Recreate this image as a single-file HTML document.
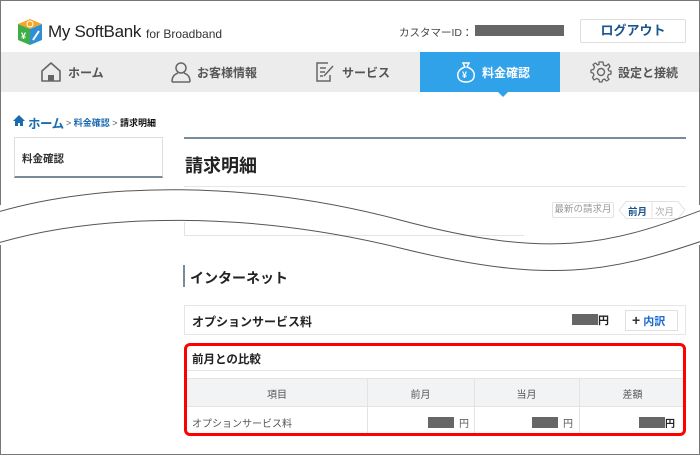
<!DOCTYPE html>
<html><head><meta charset="utf-8"><style>
*{margin:0;padding:0;box-sizing:border-box}
body{width:700px;height:455px;position:relative;overflow:hidden;background:#fff;font-family:"Liberation Sans","Noto Sans CJK JP",sans-serif;color:#333}
.a{position:absolute}
.frame{left:0;top:0;width:700px;height:455px;border:1px solid #777}
.nav{left:1px;top:52px;width:698px;height:40px;background:#ececec}
.ni{top:52px;height:40px;display:flex;align-items:center;font-size:12px;color:#555;font-weight:bold}
.g{background:#666}
</style></head><body>
<div class="a frame"></div>
<svg class="a" style="left:17px;top:18px" width="26" height="28" viewBox="0 0 26 28">
<polygon points="13,1 25,6 13,11 1,6" fill="#f5a623"/>
<circle cx="13" cy="6" r="3" fill="none" stroke="#fff" stroke-width="1"/>
<polygon points="1,6 13,11 13,27 1,22" fill="#3fae49"/>
<polygon points="13,11 25,6 25,22 13,27" fill="#2e8fd6"/>
<text x="4" y="21" font-size="9" fill="#fff" font-weight="bold">¥</text>
<path d="M16,22 L22,13" stroke="#fff" stroke-width="2"/>
</svg>
<div class="a" style="left:48px;top:22px;font-size:17px;color:#222;letter-spacing:-0.3px">My SoftBank</div>
<div class="a" style="left:146px;top:27px;font-size:12px;color:#333">for Broadband</div>
<div class="a" style="left:399px;top:25px;font-size:10.5px;color:#444">カスタマーID：</div>
<div class="a g" style="left:475px;top:25px;width:89px;height:11px"></div>
<div class="a" style="left:580px;top:19px;width:106px;height:24px;border:1px solid #ddd;border-radius:2px;text-align:center;line-height:22px;font-size:13px;font-weight:bold;color:#1a5590">ログアウト</div>
<div class="a nav"></div>
<div class="a" style="left:420px;top:52px;width:140px;height:40px;background:#30a2ea"></div>
<div class="a" style="left:498px;top:92px;width:0;height:0;border-left:5px solid transparent;border-right:5px solid transparent;border-top:5px solid #30a2ea"></div>
<div class="a ni" style="left:40px">
<svg width="22" height="22" viewBox="0 0 22 22"><path d="M2,10 L11,2 L20,10 V20 H2 Z" fill="none" stroke="#666" stroke-width="1.6" stroke-linejoin="round"/><rect x="8" y="14" width="6" height="6" fill="#666"/></svg><span style="margin-left:6px">ホーム</span></div>
<div class="a ni" style="left:171px">
<svg width="20" height="22" viewBox="0 0 20 22"><circle cx="10" cy="7" r="5" fill="none" stroke="#666" stroke-width="1.5"/><path d="M1,21 C1,14 5,13 7,12 M19,21 C19,14 15,13 13,12 M1,21 H19" fill="none" stroke="#666" stroke-width="1.5"/></svg><span style="margin-left:6px">お客様情報</span></div>
<div class="a ni" style="left:315px">
<svg width="20" height="22" viewBox="0 0 20 22"><path d="M13,2 H2 V20 H15 V14" fill="none" stroke="#666" stroke-width="1.5"/><path d="M5,7 H11 M5,11 H10 M5,15 H8 M9,15 L18,5" stroke="#666" stroke-width="1.5"/></svg><span style="margin-left:7px">サービス</span></div>
<div class="a ni" style="left:456px;color:#fff">
<svg width="20" height="22" viewBox="0 0 20 22"><path d="M7,2 H13 L11,6 C17,8 19,12 18,16 C17,20 13,21 10,21 C7,21 3,20 2,16 C1,12 3,8 9,6 Z" fill="none" stroke="#fff" stroke-width="1.5"/><text x="6" y="17" font-size="9" fill="#fff" font-weight="bold">¥</text></svg><span style="margin-left:6px">料金確認</span></div>
<div class="a ni" style="left:590px">
<svg width="22" height="22" viewBox="0 0 22 22"><circle cx="11" cy="11" r="3.5" fill="none" stroke="#666" stroke-width="1.4"/><path d="M9,1 H13 L13.5,4 L16,5 L18.5,3 L20,5.5 L18,8 L19,10 L21,10 V13 L18.5,13.5 L17.5,16 L19,18.5 L16.5,20 L14.5,18 L12.5,19 L12,21 H9.5 L9,18.5 L6.5,17.5 L4,19 L2.5,16.5 L4,14 L3,12 L1,11.5 V9 L3.5,8.5 L4.5,6 L3,3.5 L5.5,2 L7.5,4 L9,3.5 Z" fill="none" stroke="#666" stroke-width="1.3" stroke-linejoin="round"/></svg><span style="margin-left:6px">設定と接続</span></div>
<svg class="a" style="left:13px;top:115px" width="12" height="11" viewBox="0 0 12 11"><path d="M0,6 L6,0 L12,6 H10 V11 H7 V8 H5 V11 H2 V6 Z" fill="#1a6bb0"/></svg>
<div class="a" style="left:28px;top:113px;font-size:12.5px;font-weight:bold;color:#1a6bb0;letter-spacing:-0.5px">ホーム</div>
<div class="a" style="left:66px;top:116px;font-size:9px;color:#555">&gt; <span style="color:#1a6bb0;font-weight:bold">料金確認</span> &gt; <span style="color:#111;font-weight:bold">請求明細</span></div>
<div class="a" style="left:14px;top:137px;width:149px;height:41px;border:1px solid #ddd;border-bottom:2px solid #7b8a99"></div>
<div class="a" style="left:22px;top:151px;font-size:10.5px;font-weight:bold;color:#333">料金確認</div>
<div class="a" style="left:184px;top:137px;width:502px;height:2px;background:#7b8a99"></div>
<div class="a" style="left:185px;top:152px;font-size:18px;font-weight:bold;color:#222">請求明細</div>
<div class="a" style="left:184px;top:186px;width:502px;height:1px;background:#e6e6e6"></div>
<div class="a" style="left:552px;top:202px;width:62px;height:16px;border:1px solid #e3e3e3;border-radius:2px;font-size:9.5px;color:#999;text-align:center;line-height:14px">最新の請求月</div>
<svg class="a" style="left:618px;top:201px" width="70" height="18"><path d="M8,0.5 H60 L67,9 L60,17.5 H8 L1,9 Z" fill="#fff" stroke="#e3e3e3"/><line x1="34" y1="1" x2="34" y2="17" stroke="#e3e3e3"/></svg>
<div class="a" style="left:628px;top:204px;font-size:9.5px;font-weight:bold;color:#1a5590">前月</div>
<div class="a" style="left:655px;top:204px;font-size:9.5px;color:#aaa">次月</div>
<div class="a" style="left:184px;top:222px;width:1px;height:14px;background:#e3e3e3"></div>
<div class="a" style="left:184px;top:235px;width:340px;height:1px;background:#e3e3e3"></div>
<div class="a" style="left:0;top:205px;width:3px;height:40px;background:#fff"></div>
<div class="a" style="left:697px;top:205px;width:3px;height:40px;background:#fff"></div>
<svg class="a" style="left:0;top:0" width="700" height="455">
<path d="M-2,212 C100,182 250,180 400,220 S 610,245 702,210" fill="none" stroke="#555" stroke-width="1"/>
<path d="M-2,243 C100,213 250,211 400,248 S 610,272 702,241" fill="none" stroke="#555" stroke-width="1"/>
</svg>
<div class="a" style="left:183px;top:265px;width:2px;height:22px;background:#7b8a99"></div>
<div class="a" style="left:190px;top:268px;font-size:14px;font-weight:bold;color:#222">インターネット</div>
<div class="a" style="left:184px;top:305px;width:502px;height:30px;border:1px solid #e6e6e6"></div>
<div class="a" style="left:192px;top:313px;font-size:12px;font-weight:bold;color:#222">オプションサービス料</div>
<div class="a g" style="left:572px;top:314px;width:26px;height:11px"></div>
<div class="a" style="left:598px;top:312px;font-size:11px;font-weight:bold;color:#222">円</div>
<div class="a" style="left:625px;top:310px;width:53px;height:21px;border:1px solid #e0e0e0;font-size:11px;font-weight:bold;color:#1a6bd0;line-height:19px;padding-left:6px"><span style="color:#333;font-size:14px">+</span> 内訳</div>
<div class="a" style="left:184px;top:343px;width:502px;height:93px;border:3px solid #f00;border-radius:6px;overflow:hidden">
<div style="position:absolute;left:5px;top:5px;font-size:11.5px;font-weight:bold;color:#222">前月との比較</div>
<div style="position:absolute;left:0;top:24px;width:100%;height:1px;background:#e6e6e6"></div>
<div style="position:absolute;left:0;top:32px;width:100%;height:29px;background:#f2f3f5;border-top:1px solid #e3e3e3;border-bottom:1px solid #e3e3e3"></div>
<div style="position:absolute;left:180px;top:32px;width:1px;height:60px;background:#e3e3e3"></div>
<div style="position:absolute;left:287px;top:32px;width:1px;height:60px;background:#e3e3e3"></div>
<div style="position:absolute;left:392px;top:32px;width:1px;height:60px;background:#e3e3e3"></div>
<div style="position:absolute;left:0;top:40px;width:180px;text-align:center;font-size:10px;color:#555">項目</div>
<div style="position:absolute;left:180px;top:40px;width:107px;text-align:center;font-size:10px;color:#555">前月</div>
<div style="position:absolute;left:287px;top:40px;width:105px;text-align:center;font-size:10px;color:#555">当月</div>
<div style="position:absolute;left:392px;top:40px;width:107px;text-align:center;font-size:10px;color:#555">差額</div>
<div style="position:absolute;left:5px;top:69px;font-size:10px;color:#555">オプションサービス料</div>
<div class="g" style="position:absolute;left:241px;top:71px;width:26px;height:11px"></div>
<div style="position:absolute;left:272px;top:69px;font-size:10px;color:#555">円</div>
<div class="g" style="position:absolute;left:345px;top:71px;width:26px;height:11px"></div>
<div style="position:absolute;left:376px;top:69px;font-size:10px;color:#555">円</div>
<div class="g" style="position:absolute;left:452px;top:71px;width:26px;height:11px"></div>
<div style="position:absolute;left:478px;top:69px;font-size:10px;font-weight:bold;color:#222">円</div>
</div>
</body></html>
